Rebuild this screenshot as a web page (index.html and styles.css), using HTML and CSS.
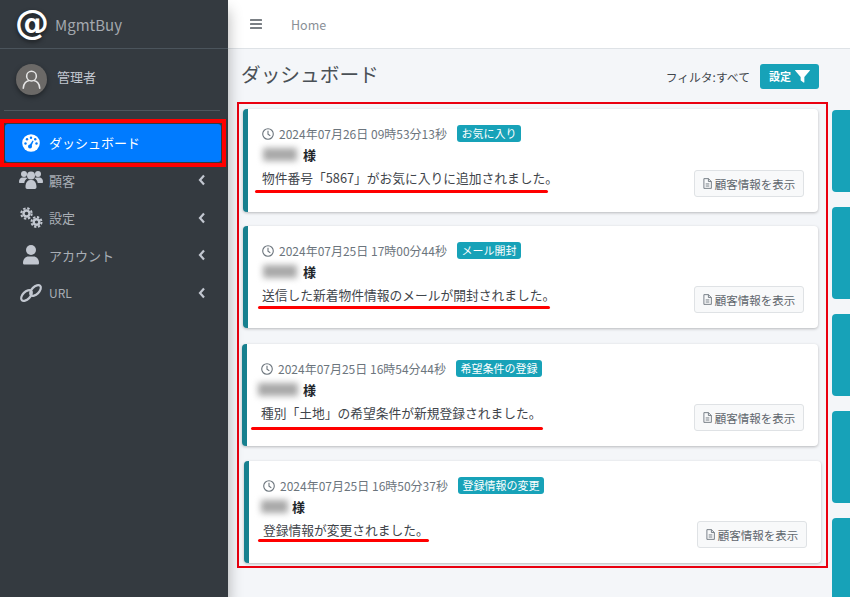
FILE: index.html
```html
<!DOCTYPE html>
<html lang="ja">
<head>
<meta charset="utf-8">
<title>ダッシュボード</title>
<link rel="stylesheet" href="styles.css">
</head>
<body>
<div class="app">
  <aside class="sidebar">
    <div class="brand"><span class="brand-mark">@</span><span class="brand-name">MgmtBuy</span></div>
    <div class="user-panel">
      <span class="avatar"><svg viewBox="0 0 32 32" width="32" height="32"><circle cx="16" cy="12" r="5" fill="none" stroke="#e6e6e6" stroke-width="1.6"/><path d="M7.5 24.5c0-5 3.5-7.5 5.5-7.8M24.500 24.500c0-5-3.500-7.500-5.500-7.800" fill="none" stroke="#e6e6e6" stroke-width="1.600" stroke-linecap="round"/></svg></span>
      <span class="user-name">管理者</span>
    </div>
    <nav class="nav">
      <a class="nav-item active">
        <span class="nav-icon"><svg viewBox="0 0 18 18" width="18" height="18"><circle cx="9" cy="9" r="8.800" fill="#fff"/><g fill="#007bff"><circle cx="9" cy="3.800" r="1.200"/><circle cx="5" cy="5.300" r="1.200"/><circle cx="13.200" cy="5.300" r="1.200"/><circle cx="3.500" cy="9.500" r="1.200"/><circle cx="14.500" cy="9.500" r="1.200"/><circle cx="8" cy="12.500" r="2"/><path d="M7.300 11.500l3.300-5 1 .5-2.300 5.500z"/></g></svg></span>
        <span>ダッシュボード</span>
      </a>
      <a class="nav-item">
        <span class="nav-icon"><svg viewBox="0 0 24 20" width="24" height="20" fill="#c2c7d0"><circle cx="5" cy="4" r="3"/><circle cx="19" cy="4" r="3"/><circle cx="12" cy="5.500" r="4"/><path d="M0 12c0-3 1.500-4.500 3.500-4.500h3c.8 0 1.500.3 2 .7-1.800 1-3 2.600-3.200 4.800H1c-.6 0-1-.4-1-1zM24 12c0-3-1.500-4.500-3.500-4.500h-3c-.8 0-1.500.3-2 .7 1.800 1 3 2.600 3.200 4.800H23c.6 0 1-.4 1-1zM6.500 17c0-4 2-7 4.500-7h2c2.500 0 4.500 3 4.500 7 0 1-.7 2-1.700 2H8.200c-1 0-1.700-1-1.700-2z"/></svg></span>
        <span class="nav-text">顧客</span>
        <svg class="chevron" viewBox="0 0 8 12" width="8" height="12"><polyline points="6,1.500 2,6 6,10.500" fill="none" stroke="#c2c7d0" stroke-width="2.200"/></svg>
      </a>
      <a class="nav-item">
        <span class="nav-icon"><svg viewBox="0 0 24 22" width="24" height="22"><g fill="none" stroke="#c2c7d0"><circle cx="7.500" cy="6.500" r="3" stroke-width="2.400"/><circle cx="7.500" cy="6.500" r="5.200" stroke-width="2" stroke-dasharray="2.400 1.700"/><circle cx="17.500" cy="15" r="2.800" stroke-width="2.400"/><circle cx="17.500" cy="15" r="5" stroke-width="2" stroke-dasharray="2.300 1.600"/></g></svg></span>
        <span class="nav-text">設定</span>
        <svg class="chevron" viewBox="0 0 8 12" width="8" height="12"><polyline points="6,1.500 2,6 6,10.500" fill="none" stroke="#c2c7d0" stroke-width="2.200"/></svg>
      </a>
      <a class="nav-item">
        <span class="nav-icon"><svg viewBox="0 0 18 20" width="18" height="20" fill="#c2c7d0"><circle cx="9" cy="5" r="5"/><path d="M1 18c0-4 2.500-6.500 5.500-6.500h5c3 0 5.500 2.500 5.500 6.500 0 1-.7 1.500-1.500 1.500h-13C1.700 19.500 1 19 1 18z"/></svg></span>
        <span class="nav-text">アカウント</span>
        <svg class="chevron" viewBox="0 0 8 12" width="8" height="12"><polyline points="6,1.500 2,6 6,10.500" fill="none" stroke="#c2c7d0" stroke-width="2.200"/></svg>
      </a>
      <a class="nav-item">
        <span class="nav-icon"><svg viewBox="0 0 24 20" width="24" height="20" fill="none" stroke="#c2c7d0" stroke-width="2.200"><ellipse cx="7.500" cy="12.500" rx="6.600" ry="3.700" transform="rotate(-45 7.500 12.500)"/><ellipse cx="16.500" cy="7.500" rx="6.600" ry="3.700" transform="rotate(-45 16.500 7.500)"/></svg></span>
        <span class="nav-text nav-latin">URL</span>
        <svg class="chevron" viewBox="0 0 8 12" width="8" height="12"><polyline points="6,1.500 2,6 6,10.500" fill="none" stroke="#c2c7d0" stroke-width="2.200"/></svg>
      </a>
    </nav>
    <div class="nav-highlight"></div>
  </aside>

  <main class="main">
    <header class="navbar">
      <svg class="menu-icon" viewBox="0 0 12 10" width="12" height="10" fill="#7a7f84"><rect width="12" height="2" rx=".5"/><rect y="4" width="12" height="2" rx=".5"/><rect y="8" width="12" height="2" rx=".5"/></svg>
      <span class="home-link">Home</span>
    </header>
    <section class="page-head">
      <h1 class="page-title">ダッシュボード</h1>
      <div class="filter">
        <span class="filter-label">フィルタ:すべて</span>
        <button class="filter-btn">設定<svg viewBox="0 0 16 14" width="15" height="13"><path d="M.5 0h15c.5 0 .6.500.3.900L10 7.500V13c0 .6-.5.800-.9.500L6.500 11.500c-.3-.2-.5-.5-.5-.8V7.500L.2.900C-.1.500 0 0 .5 0z" fill="#fff"/></svg></button>
      </div>
    </section>
    <section class="page-body">
      <div class="frame">
        <article class="card card-a">
          <div class="card-info">
            <div class="meta">
              <svg class="clock" viewBox="0 0 12 12" width="12" height="12"><circle cx="6" cy="6" r="5.300" fill="none" stroke="#6c757d" stroke-width="1.100"/><path d="M6 2.800V6.300l2.300 1.400" fill="none" stroke="#6c757d" stroke-width="1.100"/></svg>
              <span class="stamp">2024年07月26日 09時53分13秒</span><span class="badge">お気に入り</span>
            </div>
            <div class="name"><span class="blurred"></span><b>様</b></div>
            <p class="message">物件番号「5867」がお気に入りに追加されました。</p>
          </div>
          <button class="detail-btn"><svg viewBox="0 0 10 12" width="9" height="11"><path d="M1 .6h5l3.300 3.200V11.400H1zM6 .6v3.200h3.300M3 6.500h4M3 8.800h4" fill="none" stroke="#6c757d" stroke-width="1"/></svg>顧客情報を表示</button>
          <span class="underline line-a"></span>
        </article>
        <article class="card card-b">
          <div class="card-info">
            <div class="meta">
              <svg class="clock" viewBox="0 0 12 12" width="12" height="12"><circle cx="6" cy="6" r="5.300" fill="none" stroke="#6c757d" stroke-width="1.100"/><path d="M6 2.800V6.300l2.300 1.400" fill="none" stroke="#6c757d" stroke-width="1.100"/></svg>
              <span class="stamp">2024年07月25日 17時00分44秒</span><span class="badge">メール開封</span>
            </div>
            <div class="name"><span class="blurred"></span><b>様</b></div>
            <p class="message">送信した新着物件情報のメールが開封されました。</p>
          </div>
          <button class="detail-btn"><svg viewBox="0 0 10 12" width="9" height="11"><path d="M1 .6h5l3.300 3.200V11.400H1zM6 .6v3.200h3.300M3 6.500h4M3 8.800h4" fill="none" stroke="#6c757d" stroke-width="1"/></svg>顧客情報を表示</button>
          <span class="underline line-b"></span>
        </article>
        <article class="card card-c">
          <div class="card-info">
            <div class="meta">
              <svg class="clock" viewBox="0 0 12 12" width="12" height="12"><circle cx="6" cy="6" r="5.300" fill="none" stroke="#6c757d" stroke-width="1.100"/><path d="M6 2.800V6.300l2.300 1.400" fill="none" stroke="#6c757d" stroke-width="1.100"/></svg>
              <span class="stamp">2024年07月25日 16時54分44秒</span><span class="badge">希望条件の登録</span>
            </div>
            <div class="name"><span class="blurred blurred-wide"></span><b>様</b></div>
            <p class="message">種別「土地」の希望条件が新規登録されました。</p>
          </div>
          <button class="detail-btn"><svg viewBox="0 0 10 12" width="9" height="11"><path d="M1 .6h5l3.300 3.200V11.400H1zM6 .6v3.200h3.300M3 6.500h4M3 8.800h4" fill="none" stroke="#6c757d" stroke-width="1"/></svg>顧客情報を表示</button>
          <span class="underline line-c"></span>
        </article>
        <article class="card card-d">
          <div class="card-info">
            <div class="meta">
              <svg class="clock" viewBox="0 0 12 12" width="12" height="12"><circle cx="6" cy="6" r="5.300" fill="none" stroke="#6c757d" stroke-width="1.100"/><path d="M6 2.800V6.300l2.300 1.400" fill="none" stroke="#6c757d" stroke-width="1.100"/></svg>
              <span class="stamp">2024年07月25日 16時50分37秒</span><span class="badge">登録情報の変更</span>
            </div>
            <div class="name"><span class="blurred blurred-narrow"></span><b>様</b></div>
            <p class="message">登録情報が変更されました。</p>
          </div>
          <button class="detail-btn"><svg viewBox="0 0 10 12" width="9" height="11"><path d="M1 .6h5l3.300 3.200V11.400H1zM6 .6v3.200h3.300M3 6.500h4M3 8.800h4" fill="none" stroke="#6c757d" stroke-width="1"/></svg>顧客情報を表示</button>
          <span class="underline line-d"></span>
        </article>
      </div>
      <div class="tiles">
        <div class="tile tile-short"></div>
        <div class="tile"></div>
        <div class="tile tile-short"></div>
        <div class="tile"></div>
        <div class="tile"></div>
      </div>
    </section>
  </main>
</div>
</body>
</html>
```

FILE: styles.css
```css
* { box-sizing: border-box; }
html, body { margin: 0; height: 100%; overflow: hidden; }
body {
  font-family: "Noto Sans CJK JP", "Noto Sans", sans-serif;
  font-size: 13px;
  color: #343a40;
  background: #f4f6f9;
}
.app { display: flex; height: 597px; }

.sidebar {
  position: relative;
  z-index: 2;
  flex: 0 0 228px;
  background: #343a40;
  color: #c2c7d0;
  box-shadow: 0 10px 14px rgba(0, 0, 0, .3);
}
.brand {
  display: flex;
  align-items: center;
  height: 49px;
  padding-left: 15px;
  border-bottom: 1px solid #4b545c;
}
.brand-mark {
  width: 33px;
  font-family: "DejaVu Sans", sans-serif;
  font-size: 34px;
  font-weight: 700;
  line-height: 45px;
  height: 48px;
  letter-spacing: -2px;
  color: #fff;
  text-shadow: 0 2px 4px rgba(0, 0, 0, .5);
}
.brand-name { margin-left: 7px; font-size: 15px; color: #a3a8ae; }
.user-panel {
  display: flex;
  align-items: center;
  gap: 10px;
  height: 62px;
  margin: 0 8px 0 4px;
  padding: 0 0 1px 12px;
  border-bottom: 1px solid #4f565d;
}
.avatar {
  display: flex;
  width: 31px;
  height: 31px;
  border-radius: 50%;
  background: #6b6967;
  box-shadow: 0 2px 5px rgba(0, 0, 0, .4);
}
.user-name { margin-bottom: 5px; font-size: 13px; color: #c2c7d0; }

.nav { display: flex; flex-direction: column; padding-top: 13px; }
.nav-item {
  display: flex;
  align-items: center;
  height: 37.500px;
  margin-left: 5px;
  width: 216px;
  padding-left: 13px;
  font-size: 13px;
  color: #a9aeb5;
}
.nav-item.active { background: #007bff; border-radius: 3px; color: #fff; }
.nav-icon { display: flex; justify-content: center; flex: 0 0 26px; margin-right: 5px; }
.nav-text { flex: 1; }
.nav-latin { font-size: 12px; }
.chevron { margin-right: 15px; }
.nav-highlight {
  position: absolute;
  left: 0;
  top: 119px;
  width: 226px;
  height: 48px;
  border: 4px solid #f00;
}

.main { flex: 1; min-width: 0; display: flex; flex-direction: column; }
.navbar {
  flex: none;
  display: flex;
  align-items: center;
  height: 49px;
  padding-left: 22px;
  background: #fff;
  border-bottom: 1px solid #dee2e6;
}
.home-link { margin-left: 29px; font-size: 12.500px; color: #8a9097; }
.page-head {
  flex: none;
  display: flex;
  align-items: center;
  justify-content: space-between;
  height: 53px;
  padding: 0 31px 0 13px;
}
.page-title { margin: 0 0 3px; font-size: 19.700px; font-weight: 400; line-height: 1.2; color: #4a5056; }
.filter { display: flex; align-items: center; gap: 10px; margin-top: 1px; }
.filter-label { font-size: 11.800px; color: #3f454b; }
.filter-btn {
  display: flex;
  align-items: center;
  justify-content: center;
  gap: 4px;
  width: 59px;
  height: 25px;
  padding: 0;
  border: 0;
  border-radius: 3px;
  background: #17a2b8;
  color: #fff;
  font: 700 11px "Noto Sans CJK JP", sans-serif;
}

.page-body { flex: none; display: flex; align-items: flex-start; padding-left: 9px; }
.frame {
  flex: 0 0 591px;
  height: 466px;
  padding-top: 5px;
  border: 2px solid #ea0010;
}
.card {
  position: relative;
  display: flex;
  align-items: flex-end;
  justify-content: space-between;
  height: 103px;
  padding: 16px 14px 15px 14px;
  background: #fff;
  border-left: 5px solid #17808f;
  border-radius: 4px;
  box-shadow: 0 1px 3px rgba(0, 0, 0, .25);
}
.card-a { width: 575px; margin-left: 4px; }
.card-b { width: 575px; margin: 14px 0 0 4px; height: 102px; }
.card-c { width: 576px; margin: 16px 0 0 3px; height: 102px; }
.card-d { width: 577px; margin: 15px 0 0 5px; height: 102px; }
.card-info { align-self: flex-start; }
.meta { display: flex; align-items: center; height: 17px; }
.clock { margin-right: 5px; }
.stamp { font-size: 12px; color: #6c757d; }
.badge {
  margin-left: 10px;
  height: 17px;
  padding: 0 4.500px;
  border-radius: 3px;
  background: #17a2b8;
  color: #fff;
  font-size: 11px;
  line-height: 17px;
}
.name { display: flex; align-items: center; height: 16px; margin-top: 4px; }
.name b { font-size: 13px; color: #212529; }
.blurred {
  width: 34px;
  height: 13px;
  margin: 0 6px 0 1px;
  background: #a8a8a8;
  filter: blur(3px);
}
.blurred-wide { width: 40px; margin: 0 5px 0 -3px; }
.blurred-narrow { width: 27px; margin: 0 4px 0 -2px; }
.message { margin: 7px 0 0; font-size: 12.750px; line-height: 18px; color: #3f454b; }
.detail-btn {
  display: flex;
  align-items: center;
  justify-content: center;
  gap: 3px;
  width: 110px;
  height: 27px;
  padding: 0;
  border: 1px solid #dfe2e5;
  border-radius: 3px;
  background: #f8f9fa;
  color: #5f666d;
  font: 11.500px "Noto Sans CJK JP", sans-serif;
}
.underline { position: absolute; height: 3px; background: #f00; border-radius: 2px; }
.line-a { left: 7px; top: 81px; width: 293px; }
.line-b { left: 10px; top: 80px; width: 292px; }
.line-c { left: 4px; top: 83px; width: 292px; }
.line-d { left: 9px; top: 78px; width: 171px; }

.tiles {
  flex: 0 0 18px;
  display: flex;
  flex-direction: column;
  gap: 15px;
  margin: 8px 0 0 4px;
}
.tile { flex: none; height: 92px; background: #17a2b8; border-radius: 4px 0 0 4px; }
.tile-short { height: 82px; }
```
